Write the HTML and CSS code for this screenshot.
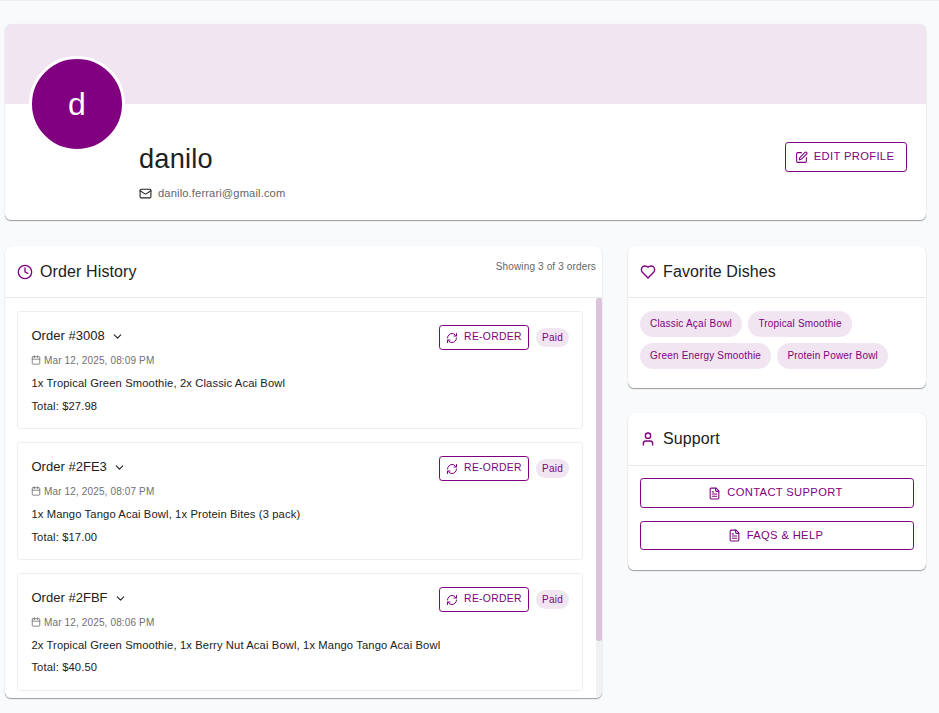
FILE: index.html
```html
<!DOCTYPE html>
<html lang="en">
<head>
<meta charset="utf-8">
<title>Profile</title>
<link rel="stylesheet" href="styles.css">
</head>
<body>
<svg class="defs" width="0" height="0" aria-hidden="true">
  <symbol id="edit" viewBox="0 0 24 24"><path d="M12 3H5a2 2 0 0 0-2 2v14a2 2 0 0 0 2 2h14a2 2 0 0 0 2-2v-7"/><path d="M18.375 2.625a1 1 0 0 1 3 3l-9.013 9.014a2 2 0 0 1-.853.505l-2.873.84a.5.5 0 0 1-.62-.62l.84-2.873a2 2 0 0 1 .506-.852z"/></symbol>
  <symbol id="mail" viewBox="0 0 24 24"><rect width="20" height="16" x="2" y="4" rx="2"/><path d="m22 7-8.97 5.7a1.94 1.94 0 0 1-2.06 0L2 7"/></symbol>
  <symbol id="clock" viewBox="0 0 24 24"><circle cx="12" cy="12" r="10"/><path d="M12 6v6l4 2"/></symbol>
  <symbol id="heart" viewBox="0 0 24 24"><path d="M19 14c1.49-1.46 3-3.21 3-5.5A5.5 5.5 0 0 0 16.5 3c-1.76 0-3 .5-4.5 2-1.5-1.5-2.74-2-4.5-2A5.5 5.5 0 0 0 2 8.500c0 2.300 1.500 4.050 3 5.500l7 7Z"/></symbol>
  <symbol id="user" viewBox="0 0 24 24"><path d="M19 21v-2a4 4 0 0 0-4-4H9a4 4 0 0 0-4 4v2"/><circle cx="12" cy="7" r="4"/></symbol>
  <symbol id="chevron" viewBox="0 0 24 24"><path d="m6 9 6 6 6-6"/></symbol>
  <symbol id="calendar" viewBox="0 0 24 24"><path d="M8 2v4M16 2v4M3 10h18"/><rect width="18" height="18" x="3" y="4" rx="2"/></symbol>
  <symbol id="refresh" viewBox="0 0 24 24"><path d="M3 12a9 9 0 0 1 9-9 9.750 9.750 0 0 1 6.740 2.740L21 8"/><path d="M21 3v5h-5"/><path d="M21 12a9 9 0 0 1-9 9 9.750 9.750 0 0 1-6.740-2.740L3 16"/><path d="M8 16H3v5"/></symbol>
  <symbol id="file" viewBox="0 0 24 24"><path d="M15 2H6a2 2 0 0 0-2 2v16a2 2 0 0 0 2 2h12a2 2 0 0 0 2-2V7Z"/><path d="M14 2v4a2 2 0 0 0 2 2h4M10 9H8M16 13H8M16 17H8"/></symbol>
</svg>
<main class="page">
  <section class="card profile">
    <div class="banner"></div>
    <div class="profile-body">
      <div class="avatar">d</div>
      <div class="identity">
        <h1 class="name">danilo</h1>
        <p class="email"><svg class="icon icon-mail"><use href="#mail"/></svg><span>danilo.ferrari@gmail.com</span></p>
      </div>
      <button class="btn btn-edit"><svg class="icon icon-btn"><use href="#edit"/></svg><span>EDIT PROFILE</span></button>
    </div>
  </section>

  <div class="columns">
    <section class="card history">
      <header class="card-head"><svg class="icon icon-head"><use href="#clock"/></svg><h2>Order History</h2><span class="count">Showing 3 of 3 orders</span></header>
      <div class="scroller">
        <div class="orders">
          <article class="order">
            <div class="info">
              <h3>Order #3008<svg class="icon icon-chevron"><use href="#chevron"/></svg></h3>
              <p class="date"><svg class="icon icon-date"><use href="#calendar"/></svg><span>Mar 12, 2025, 08:09 PM</span></p>
              <p class="line">1x Tropical Green Smoothie, 2x Classic Acai Bowl</p>
              <p class="line total">Total: $27.98</p>
            </div>
            <button class="btn btn-small"><svg class="icon icon-small"><use href="#refresh"/></svg><span>RE-ORDER</span></button>
            <span class="status">Paid</span>
          </article>
          <article class="order">
            <div class="info">
              <h3>Order #2FE3<svg class="icon icon-chevron"><use href="#chevron"/></svg></h3>
              <p class="date"><svg class="icon icon-date"><use href="#calendar"/></svg><span>Mar 12, 2025, 08:07 PM</span></p>
              <p class="line">1x Mango Tango Acai Bowl, 1x Protein Bites (3 pack)</p>
              <p class="line total">Total: $17.00</p>
            </div>
            <button class="btn btn-small"><svg class="icon icon-small"><use href="#refresh"/></svg><span>RE-ORDER</span></button>
            <span class="status">Paid</span>
          </article>
          <article class="order">
            <div class="info">
              <h3>Order #2FBF<svg class="icon icon-chevron"><use href="#chevron"/></svg></h3>
              <p class="date"><svg class="icon icon-date"><use href="#calendar"/></svg><span>Mar 12, 2025, 08:06 PM</span></p>
              <p class="line">2x Tropical Green Smoothie, 1x Berry Nut Acai Bowl, 1x Mango Tango Acai Bowl</p>
              <p class="line total">Total: $40.50</p>
            </div>
            <button class="btn btn-small"><svg class="icon icon-small"><use href="#refresh"/></svg><span>RE-ORDER</span></button>
            <span class="status">Paid</span>
          </article>
        </div>
        <div class="track"><div class="thumb"></div></div>
      </div>
    </section>

    <aside class="side">
      <section class="card favorites">
        <header class="card-head"><svg class="icon icon-head"><use href="#heart"/></svg><h2>Favorite Dishes</h2></header>
        <div class="chips">
          <span class="chip">Classic Açaí Bowl</span><span class="chip">Tropical Smoothie</span>
          <span class="chip">Green Energy Smoothie</span><span class="chip">Protein Power Bowl</span>
        </div>
      </section>
      <section class="card support">
        <header class="card-head"><svg class="icon icon-head"><use href="#user"/></svg><h2>Support</h2></header>
        <div class="actions">
          <button class="btn btn-wide"><svg class="icon icon-btn"><use href="#file"/></svg><span>CONTACT SUPPORT</span></button>
          <button class="btn btn-wide"><svg class="icon icon-btn"><use href="#file"/></svg><span>FAQS &amp; HELP</span></button>
        </div>
      </section>
    </aside>
  </div>
</main>
</body>
</html>
```

FILE: styles.css
```css
* { box-sizing: border-box; }
body {
  margin: 0;
  height: 713px;
  overflow: hidden;
  background: #f9fafc;
  border-top: 1px solid #eeeff2;
  color: #212121;
  font-family: "Liberation Sans", Arial, sans-serif;
}
h1, h2, h3, p { margin: 0; font-weight: 400; }
.defs { display: block; }
.icon { flex: none; fill: none; stroke: currentColor; stroke-width: 2; stroke-linecap: round; stroke-linejoin: round; }
.page { padding: 23px 13px 0 5px; }
.card {
  background: #fff;
  border-radius: 6.4px;
  overflow: hidden;
  box-shadow: 0 1.6px 0.8px -0.8px rgba(0,0,0,.2), 0 0.8px 0.8px rgba(0,0,0,.14), 0 1px 2px rgba(0,0,0,.09);
}

.profile { height: 196px; margin-bottom: 26px; }
.banner { height: 80px; background: #f1e5f1; }
.profile-body { display: flex; align-items: flex-start; padding: 0 19px 0 24px; }
.avatar {
  width: 96px; height: 96px; margin-top: -48px;
  border: 3px solid #fff; border-radius: 50%;
  background: #800080; color: #fff;
  font-size: 32px; line-height: 91px; text-align: center;
}
.identity { flex: 1; padding: 36px 0 0 14px; }
.name { font-size: 27.2px; line-height: 37px; letter-spacing: 0.2px; }
.email { display: flex; align-items: center; height: 16px; margin-top: 8px; color: #666; font-size: 11.2px; letter-spacing: 0.12px; }
.icon-mail { width: 13px; height: 13px; margin-right: 6px; color: #212121; }

.btn {
  display: flex; align-items: center; justify-content: center;
  padding: 0 3px 0 0; border: 1px solid #800080; border-radius: 3.2px;
  background: #fff; color: #800080;
  font-family: inherit; font-size: 11.2px; line-height: 18px; letter-spacing: 0.35px;
}
.btn span { margin-top: -2px; }
.icon-btn { width: 13px; height: 13px; margin-right: 6px; }
.btn-edit { width: 122px; height: 30px; margin-top: 38px; }

.columns { display: flex; align-items: flex-start; gap: 26px; }
.history { width: 597px; height: 452px; }
.card-head { display: flex; align-items: center; height: 52px; padding: 0 6px 0 12px; border-bottom: 1px solid #e8e8e8; }
.icon-head { width: 16px; height: 16px; margin-right: 7px; color: #800080; }
.card-head h2 { font-size: 16px; line-height: 26px; letter-spacing: 0.12px; }
.count { margin: -11px 0 0 auto; color: #666; font-size: 10px; letter-spacing: 0.14px; }

.scroller { display: flex; height: 400px; }
.orders { flex: 1; display: flex; flex-direction: column; gap: 13px; padding: 13px 13px 0 12px; }
.order { display: flex; align-items: flex-start; height: 118px; flex: none; padding: 13px 13px 0; border: 1px solid #eee; border-radius: 3.2px; }
.info { flex: 1; width: 0; margin-top: -1px; padding-left: 0.4px; white-space: nowrap; }
.order h3 { display: flex; align-items: center; height: 22px; font-size: 13px; letter-spacing: 0.03px; }
.icon-chevron { width: 13px; height: 13px; margin: 2px 0 0 6px; }
.date { display: flex; align-items: center; height: 16px; margin-top: 6px; color: #707070; font-size: 10px; letter-spacing: 0.14px; }
.icon-date { width: 10px; height: 10px; margin-right: 2.6px; }
.line { margin-top: 7px; font-size: 11.2px; line-height: 16px; letter-spacing: 0.13px; }
.order:last-child .total { margin-top: 6px; }
.btn-small { width: 90px; height: 25px; padding: 0; font-size: 10.4px; letter-spacing: 0.3px; }
.btn-small span { margin-top: -1px; }
.icon-small { width: 12px; height: 12px; margin-right: 6px; }
.status { height: 19px; width: 33px; margin: 3px 0 0 7px; border-radius: 10px; background: #f1e5f1; color: #800080; font-size: 10px; line-height: 19px; text-align: center; letter-spacing: 0.2px; }
.track { width: 6px; background: #f1f1f1; }
.thumb { height: 343px; border-radius: 3px; background: #dcc2dc; }

.side { width: 298px; }
.favorites { height: 142px; margin-bottom: 25px; }
.chips { display: flex; flex-wrap: wrap; gap: 6px 6.4px; padding: 13px 12px; }
.chip { height: 26px; padding: 0 10px; border-radius: 13px; background: #f1e5f1; color: #800080; font-size: 10px; line-height: 26px; letter-spacing: 0.18px; }
.support { height: 157px; }
.support .card-head { height: 53px; }
.actions { display: flex; flex-direction: column; gap: 13px; padding: 12px; }
.btn-wide { width: 274px; height: 30px; }
.btn-wide + .btn-wide { height: 29px; }
.btn-wide + .btn-wide span { margin-top: -1px; }
```
